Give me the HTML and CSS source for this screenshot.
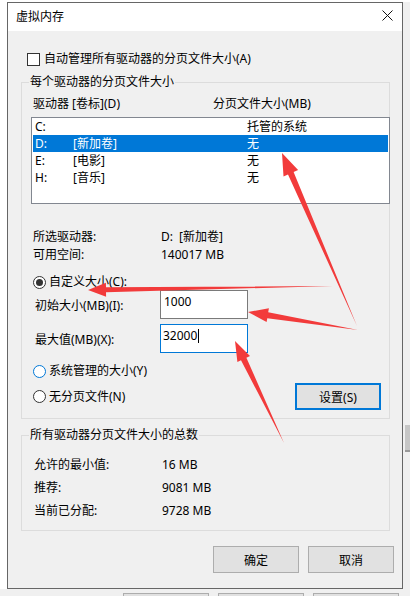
FILE: index.html
```html
<!DOCTYPE html>
<html lang="zh-CN">
<head>
    <meta charset="UTF-8">
    <meta name="viewport" content="width=device-width, initial-scale=1.0">
    <title>虚拟内存</title>
    <link rel="stylesheet" href="styles.css">
</head>
<body>
    <div class="desk">
        <div class="dialog">
            <div class="titlebar">
                <span class="title">虚拟内存</span>
                <svg class="close" width="11" height="11" viewBox="0 0 11 11">
                    <path d="M0.5 0.5 L10.5 10.5 M10.5 0.5 L0.5 10.5" stroke="#111" stroke-width="1" fill="none"/>
                </svg>
            </div>

            <div class="dialog-body">
                <div class="check-row">
                    <span class="checkbox"></span>
                    <span>自动管理所有驱动器的分页文件大小(A)</span>
                </div>

                <fieldset class="group group-drives">
                    <legend>每个驱动器的分页文件大小</legend>
                    <div class="list-head">
                        <span class="head-drive">驱动器 [卷标](D)</span>
                        <span>分页文件大小(MB)</span>
                    </div>
                    <div class="listbox">
                        <div class="list-row"><span>C:</span><span></span><span>托管的系统</span></div>
                        <div class="list-row selected"><span>D:</span><span>[新加卷]</span><span>无</span></div>
                        <div class="list-row"><span>E:</span><span>[电影]</span><span>无</span></div>
                        <div class="list-row"><span>H:</span><span>[音乐]</span><span>无</span></div>
                    </div>

                    <div class="info first">
                        <span class="info-key">所选驱动器:</span>
                        <span class="info-val"><span class="drive-letter">D:</span>[新加卷]</span>
                    </div>
                    <div class="info">
                        <span class="info-key">可用空间:</span>
                        <span class="info-val">140017 MB</span>
                    </div>

                    <div class="radio-row custom">
                        <span class="radio checked"></span>
                        <span>自定义大小(C):</span>
                    </div>
                    <div class="field-row initial">
                        <span class="field-label">初始大小(MB)(I):</span>
                        <div class="textbox">1000</div>
                    </div>
                    <div class="field-row maximum">
                        <span class="field-label">最大值(MB)(X):</span>
                        <div class="textbox focused">32000<span class="caret"></span></div>
                    </div>

                    <div class="radio-row managed">
                        <span class="radio hover"></span>
                        <span>系统管理的大小(Y)</span>
                    </div>
                    <div class="set-row">
                        <div class="radio-row">
                            <span class="radio"></span>
                            <span>无分页文件(N)</span>
                        </div>
                        <button class="btn btn-default">设置(S)</button>
                    </div>
                </fieldset>

                <fieldset class="group group-total">
                    <legend>所有驱动器分页文件大小的总数</legend>
                    <div class="total-row">
                        <span class="info-key">允许的最小值:</span>
                        <span>16 MB</span>
                    </div>
                    <div class="total-row">
                        <span class="info-key">推荐:</span>
                        <span>9081 MB</span>
                    </div>
                    <div class="total-row">
                        <span class="info-key">当前已分配:</span>
                        <span>9728 MB</span>
                    </div>
                </fieldset>

                <div class="actions">
                    <button class="btn">确定</button>
                    <button class="btn">取消</button>
                </div>
            </div>
        </div>

        <div class="side-strip">
            <div class="side-block"></div>
        </div>
    </div>

    <div class="under-bar">
        <span class="under-btn"></span>
        <span class="under-btn"></span>
        <span class="under-btn"></span>
    </div>

    <!-- red marker arrows drawn on top of the dialog -->
    <svg class="marks" width="410" height="596" viewBox="0 0 410 596">
        <g fill="#f23b3b">
            <polygon points="357,326 293.6,172.0 298.1,170.0 282,153 283.5,176.4 288.0,174.4"/>
            <polygon points="333,286 106,287.2 105.9,282.7 88,290 106.1,296.7 106,292.2"/>
            <polygon points="358,330 268.2,312.3 268.9,308.3 248,312 266.6,322.1 267.3,318.2"/>
            <polygon points="284,443 246.4,357.7 250.0,356.0 235,341 237.4,362.0 241.0,360.3"/>
        </g>
    </svg>
</body>
</html>
```

FILE: styles.css
```css
* {
    box-sizing: border-box;
}

body {
    margin: 0;
    width: 410px;
    height: 596px;
    overflow: hidden;
    position: relative;
    background-color: #fff;
    font-family: "Noto Sans", "Noto Sans CJK SC", sans-serif;
    font-size: 12px;
    color: #000;
}

.desk {
    display: flex;
    padding: 2px 0 0 7px;
}

.dialog {
    width: 396px;
    border: 1px solid #666;
    background-color: #f0f0f0;
    display: flex;
    flex-direction: column;
}

.titlebar {
    height: 28px;
    background-color: #fff;
    display: flex;
    align-items: center;
    justify-content: space-between;
    padding: 0 9px 0 8px;
    line-height: 16px;
}

.close {
    margin-top: -3px;
}

.dialog-body {
    display: flex;
    flex-direction: column;
    padding: 0 12px 15px 13px;
}

.check-row {
    margin-top: 20px;
    margin-left: 6px;
    display: flex;
    align-items: center;
    gap: 4px;
    line-height: 16px;
}

.checkbox {
    width: 13px;
    height: 13px;
    border: 1px solid #333;
    background-color: #fff;
}

.group {
    margin: 0;
    border: 1px solid #dcdcdc;
    padding: 0 8px 8px 10px;
    display: flex;
    flex-direction: column;
    min-width: 0;
}

.group legend {
    margin-left: -3px;
    padding: 0 1px;
    line-height: 16px;
}

.group-drives {
    margin-top: 7px;
    padding-top: 6px;
}

.list-head {
    display: flex;
    margin-left: 1px;
    line-height: 16px;
}

.head-drive {
    width: 180px;
}

.listbox {
    margin: 5px -9px 0 -1px;
    height: 87px;
    border: 1px solid #828790;
    background-color: #fff;
    padding: 0 1px;
}

.list-row {
    display: grid;
    grid-template-columns: 38px 174px 1fr;
    height: 17px;
    line-height: 17px;
    padding-left: 2px;
}

.list-row.selected {
    background-color: #0078d7;
    color: #fff;
}

.info {
    display: flex;
    margin-left: 1px;
    line-height: 18px;
}

.info.first {
    margin-top: 24px;
}

.info-key {
    width: 128px;
}

.drive-letter {
    margin-right: 6px;
}

.radio-row {
    display: flex;
    align-items: center;
    gap: 3px;
    line-height: 18px;
    margin-left: 1px;
}

.radio-row.custom {
    margin-top: 9px;
}

.radio-row.managed {
    margin-top: 9px;
}

.radio {
    width: 13px;
    height: 13px;
    border: 1px solid #333;
    border-radius: 50%;
    background-color: #fff;
    display: flex;
    align-items: center;
    justify-content: center;
}

.radio.checked::after {
    content: "";
    width: 7px;
    height: 7px;
    border-radius: 50%;
    background-color: #333;
}

.radio.hover {
    border-color: #0078d7;
}

.field-row {
    display: flex;
    align-items: center;
    margin-left: 3px;
}

.field-row.initial {
    margin-top: -1px;
}

.field-row.maximum {
    margin-top: 5px;
}

.field-label {
    width: 125px;
}

.textbox {
    width: 88px;
    height: 29px;
    border: 1px solid #7a7a7a;
    background-color: #fff;
    padding: 3px 0 0 3px;
    line-height: 16px;
    display: flex;
    align-items: flex-start;
}

.textbox.focused {
    border-color: #0078d7;
    padding-left: 2px;
}

.caret {
    width: 1px;
    height: 14px;
    margin-top: 1px;
    margin-left: 1px;
    background-color: #000;
}

.set-row {
    margin-top: 3px;
    display: flex;
    align-items: center;
    justify-content: space-between;
}

.btn {
    width: 86px;
    height: 27px;
    border: 1px solid #adadad;
    background-color: #e1e1e1;
    font: inherit;
    color: #000;
    padding: 0;
}

.btn-default {
    border: 2px solid #0078d7;
}

.group-total {
    margin-top: 8px;
    padding-top: 10px;
}

.total-row {
    display: flex;
    height: 23px;
    line-height: 23px;
    margin-left: 2px;
}

.actions {
    margin: 15px -4px 0 0;
    display: flex;
    justify-content: flex-end;
    gap: 9px;
}

.side-strip {
    width: 7px;
    background-color: #f0f0f0;
    padding-top: 423px;
}

.side-block {
    height: 27px;
    margin-left: 2px;
    background-color: #c6c6c6;
    border-bottom: 2px solid #999;
}

.under-bar {
    height: 20px;
    background-color: #f0f0f0;
    display: flex;
    gap: 9px;
    padding: 4px 0 0 123px;
}

.under-btn {
    width: 86px;
    height: 12px;
    border: 1px solid #adadad;
    background-color: #e1e1e1;
}

.marks {
    position: absolute;
    top: 0;
    left: 0;
    pointer-events: none;
}
```
